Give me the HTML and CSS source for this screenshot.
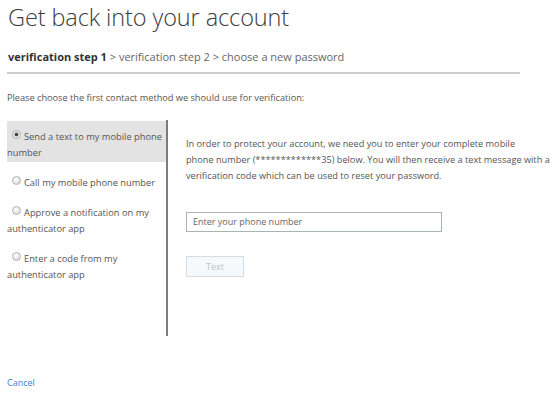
FILE: index.html
```html
<!DOCTYPE html>
<html lang="en">
<head>
<meta charset="utf-8">
<title>Get back into your account</title>
<link rel="stylesheet" href="styles.css">
</head>
<body>
<div class="page">
  <h1 class="title">Get back into your account</h1>
  <div class="crumbs"><span class="crumb-current">verification step 1</span> &gt; verification step 2 &gt; choose a new password</div>
  <div class="rule"></div>
  <p class="intro">Please choose the first contact method we should use for verification:</p>
  <div class="panel">
    <div class="options">
      <div class="option selected"><span class="radio on"></span>Send a text to my mobile phone number</div>
      <div class="option"><span class="radio"></span>Call my mobile phone number</div>
      <div class="option"><span class="radio"></span>Approve a notification on my authenticator app</div>
      <div class="option"><span class="radio"></span>Enter a code from my authenticator app</div>
    </div>
    <div class="detail">
      <p class="desc">In order to protect your account, we need you to enter your complete mobile<br>phone number (*************35) below. You will then receive a text message with a verification code which can be used to reset your password.</p>
      <div class="field">Enter your phone number</div>
      <div class="btn">Text</div>
    </div>
  </div>
  <a class="cancel" href="#">Cancel</a>
</div>
</body>
</html>
```
FILE: styles.css
```css
html, body {
  margin: 0;
  padding: 0;
  background: #ffffff;
}
.page {
  font-family: "Open Sans", "Noto Sans", sans-serif;
  color: #555;
  padding-left: 7px;
  width: 549px;
}
.title {
  margin: 0;
  font-size: 23.5px;
  font-weight: 300;
  line-height: 34px;
  color: #3c3c3c;
  padding-left: 1px;
  letter-spacing: -0.1px;
}
.crumbs {
  margin-top: 15px;
  font-size: 11px;
  line-height: 16px;
  color: #666;
  padding-left: 1px;
}
.crumb-current {
  font-weight: 700;
  color: #333;
}
.rule {
  margin-top: 7px;
  width: 513px;
  height: 2px;
  background: #cdcdcd;
}
.intro {
  margin: 18px 0 0;
  font-size: 9.2px;
  line-height: 12px;
  color: #555;
}
.panel {
  margin-top: 16px;
  display: flex;
  height: 216px;
}
.options {
  width: 159px;
  border-right: 2px solid #7c7c7c;
  padding-top: 1px;
  font-size: 9.3px;
  line-height: 16px;
  color: #555;
}
.option {
  padding: 8px 0 1px;
  margin-bottom: 5px;
}
.option.selected {
  background: #e3e3e3;
}
.radio {
  display: inline-block;
  width: 7px;
  height: 7px;
  border: 1px solid #b4b4b4;
  border-radius: 50%;
  background: radial-gradient(circle at 40% 35%, #ffffff, #d0d0d0);
  margin: 0 3px 0 5px;
  vertical-align: 1px;
}
.radio.on {
  background: radial-gradient(circle, #444 0 1.6px, #eaeaea 2.2px, #cfcfcf);
}
.detail {
  padding-left: 18px;
  flex: 1;
}
.desc {
  margin: 16px 0 0;
  width: 366px;
  font-size: 9.2px;
  line-height: 16px;
  color: #555;
}
.field {
  margin-top: 28px;
  width: 248px;
  height: 18px;
  border: 1px solid #a7b5b5;
  padding-left: 6px;
  font-size: 9px;
  line-height: 18px;
  color: #666;
}
.btn {
  margin-top: 24px;
  width: 56px;
  height: 19px;
  border: 1px solid #d5dde2;
  background: #f5f9fb;
  color: #bcc5ca;
  font-size: 9px;
  line-height: 19px;
  text-align: center;
}
.cancel {
  display: block;
  margin-top: 41px;
  font-size: 9px;
  line-height: 12px;
  color: #3b7fd4;
  text-decoration: none;
  width: max-content;
}
```
